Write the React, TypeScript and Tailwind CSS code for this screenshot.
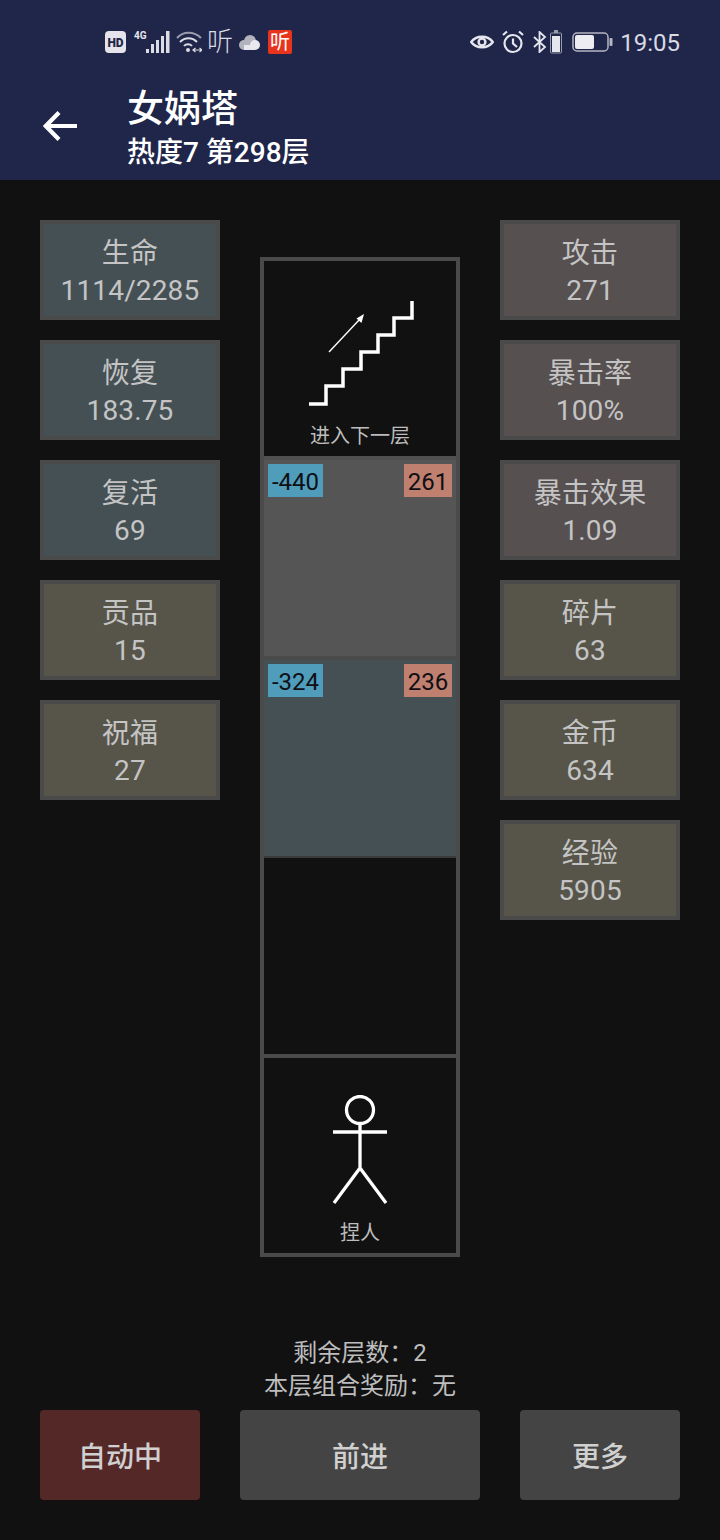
import type { ReactNode } from 'react'

const FONT = "font-['Roboto','Noto_Sans_CJK_SC',sans-serif]"

const leftStats = [
  { label: '生命', value: '1114/2285', tone: 'blue' },
  { label: '恢复', value: '183.75', tone: 'blue' },
  { label: '复活', value: '69', tone: 'blue' },
  { label: '贡品', value: '15', tone: 'olive' },
  { label: '祝福', value: '27', tone: 'olive' },
]

const rightStats = [
  { label: '攻击', value: '271', tone: 'brown' },
  { label: '暴击率', value: '100%', tone: 'brown' },
  { label: '暴击效果', value: '1.09', tone: 'brown' },
  { label: '碎片', value: '63', tone: 'olive' },
  { label: '金币', value: '634', tone: 'olive' },
  { label: '经验', value: '5905', tone: 'olive' },
]

function StatCard({ label, value, tone }: { label: string; value: string; tone: string }) {
  return (
    <div
      className={
        'flex h-[100px] w-[180px] flex-col items-center justify-center border-4 border-[#4a4a4a] pt-[3px] text-[28px] tracking-[0.15px] text-[#c4c4c4] ' +
        (tone === 'blue' ? 'bg-[#455055]' : tone === 'brown' ? 'bg-[#575050]' : 'bg-[#57554a]')
      }
    >
      <span className="leading-[38px]">{label}</span>
      <span className="leading-[36px]">{value}</span>
    </div>
  )
}

function EnemyCell({ hp, atk, bg }: { hp: string; atk: string; bg: string }) {
  return (
    <div className={'flex h-[196px] items-start justify-between p-1 text-[24px] leading-[33px] text-[#0f0f14] ' + bg}>
      <span className="flex h-[33px] w-[55px] items-center justify-center bg-[#4f9dba] pt-[3px]">{hp}</span>
      <span className="flex h-[33px] w-[48px] items-center justify-center bg-[#c0806f] pt-[3px]">{atk}</span>
    </div>
  )
}

function StairsIcon() {
  return (
    <svg width="120" height="120" viewBox="0 0 120 120" fill="none" stroke="#fff" className="block">
      <path d="M9 104H26V86H43V69H61V52H78V35H94V18H112V1" strokeWidth="3.5" />
      <path d="M29 52L60 19" strokeWidth="1.4" />
      <path d="M64 14L61.5 23L56.5 18.5Z" fill="#fff" stroke="none" />
    </svg>
  )
}

function StickFigure() {
  return (
    <svg width="56" height="112" viewBox="0 0 56 112" fill="none" stroke="#fff" strokeWidth="3.3" className="block">
      <circle cx="28" cy="15" r="13.5" />
      <path d="M28 29V73M1 37H55M28 73L2 108M28 73L54 108" />
    </svg>
  )
}

function TowerCell({ icon, label, pt }: { icon: ReactNode; label: string; pt: string }) {
  return (
    <div className={'flex h-[195px] flex-col items-center bg-[#111111] ' + pt}>
      {icon}
      <span className="mt-auto mb-[6px] text-[20px] leading-[28px] text-[#bdbdbd]">{label}</span>
    </div>
  )
}

function StatusIcons() {
  return (
    <div className="flex h-[30px] items-center text-[#e6e6ee]">
      <svg width="21" height="22" viewBox="0 0 21 22" className="ml-[105px]">
        <rect x="0" y="0" width="21" height="22" rx="4" fill="#e4e4ea" />
        <text x="10.5" y="15.5" textAnchor="middle" fontSize="12" fontWeight="900" fontFamily="Roboto" fill="#1f2547">HD</text>
      </svg>
      <div className="relative ml-[8px] h-[24px] w-[36px]">
        <span className="absolute top-0 left-0 text-[10px] leading-[11px] font-bold">4G</span>
        <svg width="24" height="23" viewBox="0 0 24 23" className="absolute right-0 bottom-0" fill="#dcdce4">
          <rect x="0" y="18" width="3" height="4" />
          <rect x="5" y="13" width="3" height="9" />
          <rect x="10" y="9" width="3" height="13" />
          <rect x="15" y="5" width="3" height="17" />
          <rect x="20" y="0" width="3.5" height="22" />
        </svg>
      </div>
      <svg width="26" height="24" viewBox="0 0 26 24" fill="none" stroke="#dcdce4" className="ml-[6px]">
        <path d="M1 8C7 1 18 1 25 8" strokeWidth="2" stroke="#9a9cab" />
        <path d="M4 12C9 7 16 7 21 12" strokeWidth="2" />
        <path d="M8 16C10 13.5 14 13.5 16 16" strokeWidth="2" />
        <circle cx="12" cy="20" r="2" fill="#dcdce4" stroke="none" />
        <path d="M17 20H26M19.5 18L17 20L19.5 22M23.5 18L26 20L23.5 22" strokeWidth="1.2" />
      </svg>
      <span className="ml-[5px] w-[25px] text-[26px] leading-[28px] font-light text-[#dcdce4]">听</span>
      <svg width="21" height="15" viewBox="0 0 21 15" className="ml-[7px]" fill="#c8c8d0">
        <circle cx="5" cy="10" r="5" fill="#b2b3bd" />
        <circle cx="11" cy="6" r="6" fill="#b2b3bd" />
        <circle cx="16" cy="10" r="5" fill="#e8e8ee" />
        <rect x="5" y="10" width="11" height="5" fill="#e8e8ee" />
      </svg>
      <span className="ml-[8px] flex h-[24px] w-[24px] items-center justify-center rounded-[2px] bg-[#e8341c] text-[20px] leading-[24px] text-white">听</span>
      <div className="ml-auto flex items-center">
        <svg width="24" height="18" viewBox="0 0 24 18" fill="none" stroke="#e6e6ee" strokeWidth="2.4">
          <path d="M1.2 9C6 2 18 2 22.8 9C18 16 6 16 1.2 9Z" />
          <circle cx="12" cy="9" r="3.4" />
        </svg>
        <svg width="24" height="24" viewBox="0 0 24 24" fill="none" stroke="#e6e6ee" strokeWidth="2.2" className="ml-[7px]">
          <circle cx="12" cy="13.5" r="8.5" />
          <path d="M12 8.5V13.5L16 17M2 5L6 1.5M22 5L18 1.5" />
        </svg>
        <svg width="14" height="22" viewBox="0 0 14 22" fill="none" stroke="#e6e6ee" strokeWidth="1.8" className="ml-[8px]">
          <path d="M1 6L12 16L6.5 21V1L12 6L1 16" />
        </svg>
        <svg width="12" height="24" viewBox="0 0 12 24" className="ml-[3px]">
          <rect x="4" y="0" width="4" height="3" fill="#9a9cab" />
          <rect x="0.5" y="3" width="11" height="20" rx="1" fill="none" stroke="#9a9cab" />
          <rect x="2" y="6" width="8" height="16" fill="#e6e6ee" />
        </svg>
        <svg width="41" height="20" viewBox="0 0 41 20" className="ml-[10px]">
          <rect x="1" y="1" width="35" height="18" rx="4" fill="none" stroke="#b5b6c2" strokeWidth="1.5" />
          <rect x="3" y="3" width="19" height="14" rx="2" fill="#ececf2" />
          <rect x="37.5" y="6" width="3" height="8" rx="1" fill="#b5b6c2" />
        </svg>
        <span className="mt-[1px] ml-[7px] text-[24px] leading-[30px] text-[#d9dae2]">19:05</span>
      </div>
    </div>
  )
}

export default function App() {
  return (
    <div className={'flex h-[1540px] w-[720px] flex-col bg-[#111111] ' + FONT}>
      <header className="h-[180px] shrink-0 bg-[#20264a] pt-[27px]">
        <div className="pr-[40px]">
          <StatusIcons />
        </div>
        <div className="mt-[31px] flex items-center pl-[43px]">
          <svg width="36" height="32" viewBox="0 0 36 32" fill="none" stroke="#fff" strokeWidth="4.2" className="mb-[9px]">
            <path d="M34 16H4M16 2.5L2.8 16L16 29.5" />
          </svg>
          <div className="ml-[48px] flex flex-col text-white">
            <h1 className="text-[37px] leading-[44px] font-medium">女娲塔</h1>
            <p className="mt-[2px] text-[28px] leading-[38px] font-medium">热度7 第298层</p>
          </div>
        </div>
      </header>

      <main className="flex flex-1 items-start justify-between px-[40px] pt-[40px]">
        <div className="flex flex-col gap-5">
          {leftStats.map((s) => (
            <StatCard key={s.label} {...s} />
          ))}
        </div>

        <div className="mt-[37px] flex w-[200px] flex-col border-4 border-[#4a4a4a] bg-[#4a4a4a]">
          <TowerCell icon={<StairsIcon />} label="进入下一层" pt="pt-[39px]" />
          <div className="h-[4px] bg-[#4f4f4f]" />
          <EnemyCell hp="-440" atk="261" bg="bg-[#555555]" />
          <div className="h-[4px] bg-[#4a4a4a]" />
          <EnemyCell hp="-324" atk="236" bg="bg-[#455055]" />
          <div className="h-[2px] bg-[#3a3a3a]" />
          <div className="h-[196px] bg-[#111111]" />
          <div className="h-[4px] bg-[#4a4a4a]" />
          <TowerCell icon={<StickFigure />} label="捏人" pt="pt-[37px]" />
        </div>

        <div className="flex flex-col gap-5">
          {rightStats.map((s) => (
            <StatCard key={s.label} {...s} />
          ))}
        </div>
      </main>

      <footer className="shrink-0 px-[40px] pb-[40px]">
        <div className="mb-[7px] text-center text-[24px] leading-[33px] text-[#bdbdbd]">
          <p>剩余层数：2</p>
          <p>本层组合奖励：无</p>
        </div>
        <div className="flex gap-10 text-[28px] font-medium text-[#d0d0d0]">
          <button className="h-[90px] w-[160px] rounded-[4px] bg-[#552828] pt-[5px]">自动中</button>
          <button className="h-[90px] w-[240px] rounded-[4px] bg-[#444444] pt-[5px]">前进</button>
          <button className="h-[90px] w-[160px] rounded-[4px] bg-[#444444] pt-[5px]">更多</button>
        </div>
      </footer>
    </div>
  )
}
